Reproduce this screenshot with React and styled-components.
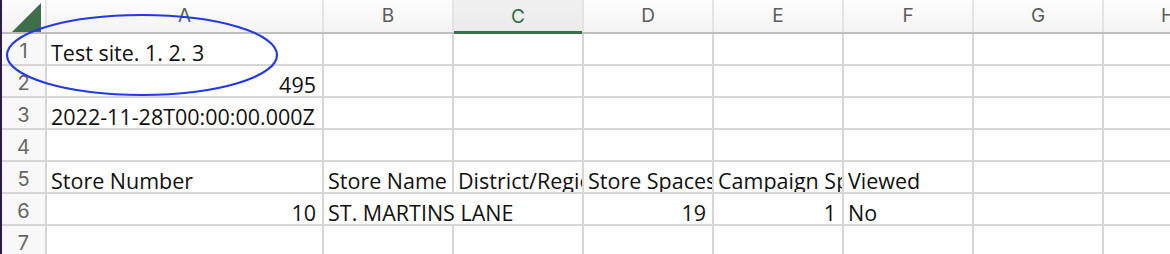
import styled, { createGlobalStyle } from "styled-components";

const GlobalStyle = createGlobalStyle`
  html, body {
    margin: 0;
    padding: 0;
    background: #ffffff;
    overflow: hidden;
  }
`;

const columns = ["A", "B", "C", "D", "E", "F", "G", "H"];
const selectedColumn = "C";
const template = "43px 275px repeat(7, 128px)";

const rows = [
  ["Test site. 1. 2. 3"],
  [{ value: "495", num: true }],
  ["2022-11-28T00:00:00.000Z"],
  [],
  ["Store Number", "Store Name", "District/Region", "Store Spaces", "Campaign Spaces", "Viewed"],
  [
    { value: "10", num: true },
    { value: "ST. MARTINS LANE", spill: true },
    "",
    { value: "19", num: true },
    { value: "1", num: true },
    "No",
  ],
  [],
];

const Page = styled.div`
  display: flex;
  height: 254px;
  overflow: hidden;
  position: relative;
`;

const Edge = styled.div`
  width: 2px;
  flex: none;
  background: #2a1c4c;
`;

const Sheet = styled.div`
  flex: 1;
  display: flex;
  flex-direction: column;
  overflow: hidden;
`;

const HeaderRow = styled.div`
  display: grid;
  grid-template-columns: ${template};
  column-gap: 2px;
  height: 35px;
  background: #e4e4e4;
  border-bottom: 2px solid #bdbdbd;
`;

const Corner = styled.div`
  background: linear-gradient(#fbfbfb, #f3f3f3);
  display: flex;
  align-items: flex-start;
  justify-content: flex-end;
  padding: 3px 4px 0 0;
`;

const ColHead = styled.div`
  display: flex;
  align-items: center;
  justify-content: center;
  padding-bottom: 2px;
  font-family: Inter, "Liberation Sans", sans-serif;
  font-size: 19px;
  color: ${(p) => (p.$active ? "#2f6d42" : "#5c5c5c")};
  background: ${(p) =>
    p.$active ? "linear-gradient(#f1f1f1, #ebebeb)" : "linear-gradient(#fdfdfd, #f4f4f4)"};
  box-shadow: ${(p) => (p.$active ? "inset 0 -3px 0 #3b6f47" : "none")};
  margin-bottom: ${(p) => (p.$active ? "-2px" : "0")};
`;

const Body = styled.div`
  display: grid;
  grid-template-columns: ${template};
  grid-auto-rows: 30px;
  gap: 2px;
  background: #d6d6d6;
`;

const RowHead = styled.div`
  background: #f8f8f8;
  display: flex;
  align-items: flex-end;
  justify-content: center;
  padding-bottom: 1px;
  font-family: Inter, "Liberation Sans", sans-serif;
  font-size: 20px;
  line-height: 24px;
  color: #666666;
`;

const Cell = styled.div`
  background: #ffffff;
  display: flex;
  align-items: flex-end;
  justify-content: ${(p) => (p.$num ? "flex-end" : "flex-start")};
  padding: 0 6px 0 4px;
  font-family: "Open Sans", Lato, sans-serif;
  font-size: 21.5px;
  line-height: 22px;
  color: #111111;
  white-space: nowrap;
  overflow: ${(p) => (p.$clip ? "hidden" : "visible")};
  position: relative;
  z-index: ${(p) => (p.$spill ? 1 : 0)};
  margin-right: ${(p) => (p.$spill ? "-2px" : "0")};
`;

const Ring = styled.svg`
  position: absolute;
  left: 0;
  top: 0;
  pointer-events: none;
  z-index: 5;
`;

function App() {
  return (
    <Page>
      <GlobalStyle />
      <Edge />
      <Sheet>
        <HeaderRow>
          <Corner>
            <svg width="29" height="29" viewBox="0 0 29 29">
              <polygon points="29,0 29,29 0,29" fill="#3e6e4a" />
            </svg>
          </Corner>
          {columns.map((c) => (
            <ColHead key={c} $active={c === selectedColumn}>
              {c}
            </ColHead>
          ))}
        </HeaderRow>
        <Body>
          {rows.map((row, r) => [
            <RowHead key={"h" + r}>{r + 1}</RowHead>,
            ...columns.map((c, i) => {
              const item = row[i];
              const value = typeof item === "object" ? item.value : item || "";
              const num = typeof item === "object" && item.num;
              const spill = typeof item === "object" && item.spill;
              const next = row[i + 1];
              const clip = next !== undefined && next !== "";
              return (
                <Cell key={c + r} $num={num} $clip={clip} $spill={spill}>
                  {value}
                </Cell>
              );
            }),
          ])}
        </Body>
      </Sheet>
      <Ring width="300" height="110">
        <ellipse cx="142" cy="55" rx="135" ry="40" fill="none" stroke="#2339e3" strokeWidth="2.2" />
      </Ring>
    </Page>
  );
}

export default App;
